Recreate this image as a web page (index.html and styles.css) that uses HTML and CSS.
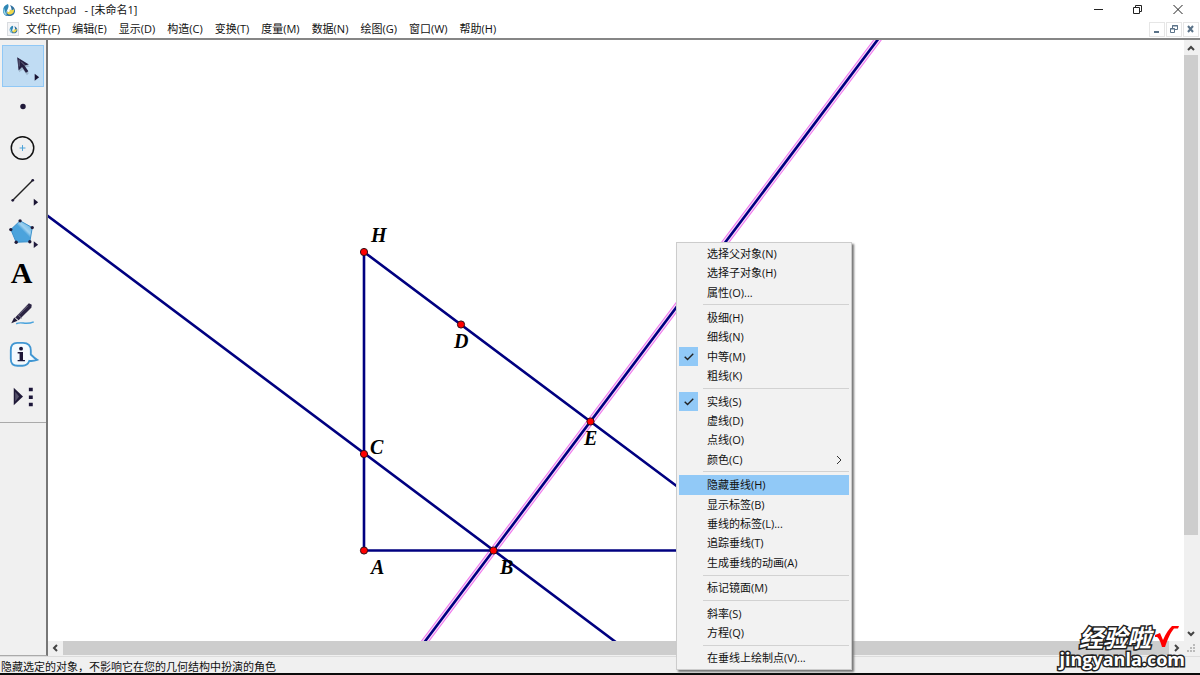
FILE: index.html
```html
<!DOCTYPE html>
<html lang="zh-CN">
<head>
<meta charset="utf-8">
<title>Sketchpad - [未命名1]</title>
<link rel="stylesheet" href="styles.css">
</head>
<body>
<svg class="defs" aria-hidden="true">
  <defs>
    <linearGradient id="penta" x1="1" y1="0" x2="0" y2="1"><stop offset="0.1" stop-color="#5fb0e0"/><stop offset="0.35" stop-color="#a0d2f1"/><stop offset="0.45" stop-color="#4ba3dc"/><stop offset="1" stop-color="#4ba3dc"/></linearGradient>
    <symbol id="logo" viewBox="0 0 14 14">
      <path d="M6 1C3 2 1 4 1 7.500s2 5.500 5 5.500c-2-2-2-4-.500-6.500C6.500 4.500 7 3 6 1z" fill="#2f86b4"/>
      <path d="M2 5c1 3 1 5 3.500 7.500L3 11.500C1.500 10 1 7 2 5z" fill="#9fdcf0"/>
      <path d="M8 2c3 1 5 3 5 6s-2.500 5-5.500 5S4 11 5 8c1 2 2 2.500 3.500 2S10 5 8 2z" fill="#2d6f9f"/>
      <path d="M7.500 6c2 2 3 1.500 4.500 0 .500 3-1 5-3.500 5.500S5 10.500 5 8.500c1.500 1.500 3.500 0 2.500-2.500z" fill="#f0d84a"/>
    </symbol>
  </defs>
</svg>
<div class="window">
  <header class="titlebar">
    <svg class="app-icon"><use href="#logo"/></svg>
    <h1 class="title"><span>Sketchpad</span><span>- [未命名1]</span></h1>
    <div class="window-controls">
      <button aria-label="最小化"><svg width="12" height="12" viewBox="0 0 12 12"><path d="M2 5.500h9"/></svg></button>
      <button aria-label="还原"><svg width="12" height="12" viewBox="0 0 12 12"><path d="M1.500 3.500h6v6h-6zM3.500 3.500v-2h6v6h-2"/></svg></button>
      <button aria-label="关闭"><svg width="12" height="12" viewBox="0 0 12 12"><path d="M1.500 1l9 9M10.500 1l-9 9"/></svg></button>
    </div>
  </header>
  <nav class="menubar">
    <span class="doc-icon"><svg><use href="#logo"/></svg></span>
    <div class="menus">
      <button>文件(F)</button><button>编辑(E)</button><button>显示(D)</button><button>构造(C)</button><button>变换(T)</button><button>度量(M)</button><button>数据(N)</button><button>绘图(G)</button><button>窗口(W)</button><button>帮助(H)</button>
    </div>
    <div class="doc-controls">
      <button aria-label="最小化文档"><svg width="10" height="10" viewBox="0 0 10 10"><path d="M2 8h5"/></svg></button>
      <button aria-label="还原文档"><svg width="10" height="10" viewBox="0 0 10 10"><path class="thin" d="M1.500 4.500h4v4h-4zM1 5h5M3.500 4V1.500h5v4H6M3 2h6"/></svg></button>
      <button aria-label="关闭文档"><svg width="10" height="10" viewBox="0 0 10 10"><path d="M2 2l5 6M7 2L2 8"/></svg></button>
    </div>
  </nav>
  <main class="workspace">
    <aside class="toolbox">
      <div class="tools">
        <button class="tool selected" aria-label="移动箭头工具"><svg viewBox="0 0 42 42"><path d="M16 14l12 8-5 1 4 6-2 2-4-6-4 3z" fill="#8296a9" opacity=".5"/><path d="M15 12.500l12 7.500-4.500 1 4 6-2.500 1.500-4-6-3.500 3.500z" fill="#251f40"/><path d="M17 15v7M19 17l4 4" stroke="#70708a"/><path d="M33 29.500v7l4.500-3.500z" fill="#1a1433"/></svg></button>
        <button class="tool" aria-label="点工具"><svg viewBox="0 0 42 42"><circle cx="21" cy="20" r="2.800" fill="#201a3a"/></svg></button>
        <button class="tool" aria-label="圆工具"><svg viewBox="0 0 42 42"><circle cx="20.500" cy="20.500" r="11.500" fill="none" stroke="#111" stroke-width="1.500"/><path d="M17.500 20.500h6M20.500 17.500v6" stroke="#4aa1d8"/></svg></button>
        <button class="tool" aria-label="线段工具"><svg viewBox="0 0 42 42"><path d="M10.500 31L31 10.500" stroke="#222" stroke-width="1.400"/><circle cx="10.500" cy="31" r="1.400"/><circle cx="31" cy="10.500" r="1.400"/><path d="M32 29.500v7l4.500-3.500z" fill="#1a1433"/></svg></button>
        <button class="tool" aria-label="多边形工具"><svg viewBox="0 0 42 42"><path d="M18 9l12.500 7L28 30.500 14 31 8.500 18z" fill="url(#penta)" stroke="#3990cc"/><g fill="#211b3d"><circle cx="18" cy="9" r="1.700"/><circle cx="30.500" cy="16" r="1.700"/><circle cx="28" cy="30.500" r="1.700"/><circle cx="14" cy="31" r="1.700"/><circle cx="8.500" cy="18" r="1.700"/><path d="M32 30v7l4.500-3.500z"/></g></svg></button>
        <button class="tool" aria-label="文本工具"><span class="letter">A</span></button>
        <button class="tool" aria-label="标记工具"><svg viewBox="0 0 42 42"><path d="M14 30.500c6-3 9 2 18-2" fill="none" stroke="#49a2dc" stroke-width="1.500"/><path d="M9 30l3-6 3.500 3.500z" fill="#201a38"/><path d="M13 24L27 9.500l3 1.500-.500 3-13 13z" fill="#2a2342"/><path d="M16 21.500l4 3.500M17 21l9-9" stroke="#77738a"/></svg></button>
        <button class="tool" aria-label="信息工具"><svg viewBox="0 0 42 42"><path d="M15 8h6q8 0 8 8v4q4 4 6.500 5.500-4 1.500-8 1-2 5-7 5h-5q-7 0-7-7v-9q0-7.500 6.500-7.500z" fill="#f4fafe" stroke="#4096d2" stroke-width="1.900"/><circle cx="19" cy="14" r="2" fill="#1c1639"/><path d="M15.500 17.500H21V25.500h2V27h-7.500V25.500h2v-6.500h-2z" fill="#1c1639"/></svg></button>
        <button class="tool" aria-label="自定义工具"><svg viewBox="0 0 42 42"><path d="M11.500 11v18l9.500-9z" fill="#201a38"/><path d="M13 15v10l4-5z" fill="#55516a"/><path d="M27 11h4v3.500h-4zM27 19h4v3.500h-4zM27 26.500h4V30h-4z" fill="#1c1639"/></svg></button>
      </div>
    </aside>
    <section class="document">
      <svg class="canvas" role="img" aria-label="几何图形">
        <g transform="translate(-48 -40)">
          <path class="halo" d="M417 652L885 30"/>
          <path class="halo-fill" d="M417 652L885 30"/>
          <g class="lines"><path d="M40 210L629 652M364 550.500V252L700 503.500M364 550.500H740M417 652L885 30"/></g>
          <g class="points"><circle cx="364" cy="252" r="3.600"/><circle cx="461" cy="324.500" r="3.600"/><circle cx="590.500" cy="421.500" r="3.600"/><circle cx="364" cy="454" r="3.600"/><circle cx="364" cy="550.500" r="3.600"/><circle cx="493.500" cy="550.500" r="3.600"/></g>
          <g class="labels"><text x="371" y="242">H</text><text x="454" y="348">D</text><text x="584" y="445">E</text><text x="370" y="454">C</text><text x="371" y="574">A</text><text x="500" y="574">B</text></g>
        </g>
      </svg>
      <div class="scroll vertical">
        <button aria-label="向上滚动"><svg width="10" height="10" viewBox="0 0 10 10"><path d="M2 7l3-3 3 3"/></svg></button>
        <div class="track"><div class="thumb"></div></div>
        <button aria-label="向下滚动"><svg width="10" height="10" viewBox="0 0 10 10"><path d="M2 3l3 3 3-3"/></svg></button>
      </div>
      <div class="scroll horizontal">
        <button aria-label="向左滚动"><svg width="10" height="10" viewBox="0 0 10 10"><path d="M6 2L3 5l3 3"/></svg></button>
        <div class="track"><div class="thumb"></div></div>
        <button aria-label="向右滚动"><svg width="10" height="10" viewBox="0 0 10 10"><path d="M3 2l3 3-3 3"/></svg></button>
      </div>
      <svg class="grip" viewBox="0 0 14 14"><path d="M9 3h2v2H9zM6 6h2v2H6zM9 6h2v2H9zM3 9h2v2H3zM6 9h2v2H6zM9 9h2v2H9z"/></svg>
    </section>
  </main>
  <footer class="status">隐藏选定的对象，不影响它在您的几何结构中扮演的角色</footer>
</div>

<div class="context-menu" role="menu">
  <button role="menuitem">选择父对象(N)</button>
  <button role="menuitem">选择子对象(H)</button>
  <button role="menuitem">属性(O)...</button>
  <hr>
  <button role="menuitem">极细(H)</button>
  <button role="menuitem">细线(N)</button>
  <button role="menuitemradio" aria-checked="true"><svg class="check" viewBox="0 0 20 20"><path d="M6 10l3 3 6-6"/></svg>中等(M)</button>
  <button role="menuitem">粗线(K)</button>
  <hr>
  <button role="menuitemradio" aria-checked="true"><svg class="check" viewBox="0 0 20 20"><path d="M6 10l3 3 6-6"/></svg>实线(S)</button>
  <button role="menuitem">虚线(D)</button>
  <button role="menuitem">点线(O)</button>
  <button role="menuitem">颜色(C)<svg class="more" viewBox="0 0 8 10"><path d="M2 1l4 4-4 4"/></svg></button>
  <hr>
  <button class="active" role="menuitem">隐藏垂线(H)</button>
  <button role="menuitem">显示标签(B)</button>
  <button role="menuitem">垂线的标签(L)...</button>
  <button role="menuitem">追踪垂线(T)</button>
  <button role="menuitem">生成垂线的动画(A)</button>
  <hr>
  <button role="menuitem">标记镜面(M)</button>
  <hr>
  <button role="menuitem">斜率(S)</button>
  <button role="menuitem">方程(Q)</button>
  <hr>
  <button role="menuitem">在垂线上绘制点(V)...</button>
</div>

<div class="watermark">
  <div class="brand"><span>经验啦</span><svg viewBox="0 0 24 24"><path d="M0 10l5-2 3 7C11 8 14 4 17 1h7l-1 2.500h-4c-4 5-6 10-9 18.500H7C6 18 4 13 2 12H0z" fill="#f00"/></svg></div>
  <div class="site">jingyanla.com</div>
</div>
</body>
</html>
```
FILE: styles.css
```css
* { box-sizing: border-box; }
body {
  margin: 0;
  font: 11px/16px "Open Sans", "Noto Sans CJK SC", sans-serif;
  color: #111;
  overflow: hidden;
}
button {
  margin: 0;
  padding: 0;
  border: 0;
  background: none;
  color: inherit;
  font: inherit;
}
svg { display: block; }
.defs { position: absolute; width: 0; height: 0; }
.window {
  display: flex;
  flex-direction: column;
  height: 100vh;
  background: #fff;
  border-bottom: 2px solid #0b0b0b;
}

.titlebar {
  display: flex;
  align-items: center;
  height: 20px;
  padding-left: 2px;
}
.app-icon { width: 14px; height: 14px; }
.title {
  display: flex;
  gap: 8px;
  margin: 0 auto 0 7px;
  font-size: 11px;
  font-weight: 400;
}
.window-controls { display: flex; padding-right: 2px; }
.window-controls button {
  display: grid;
  place-items: center;
  width: 40px;
  height: 18px;
}
.window-controls svg { fill: none; stroke: #222; stroke-width: 1; }

.menubar {
  display: flex;
  align-items: center;
  height: 20px;
  padding: 0 1px 0 7px;
  border-bottom: 2px solid #868686;
}
.doc-icon {
  display: grid;
  place-items: center;
  width: 12px;
  height: 14px;
  background: #f4f5f7;
  border: 1px solid #d9dce0;
}
.doc-icon svg { width: 9px; height: 9px; }
.menus { display: flex; gap: 12px; margin: 0 auto 0 7px; }
.doc-controls { display: flex; gap: 1px; }
.doc-controls button {
  display: grid;
  place-items: center;
  width: 16px;
  height: 15px;
  border: 1px solid #e6e6e6;
}
.doc-controls svg { fill: none; stroke: #5b7389; stroke-width: 2; }
.doc-controls .thin { stroke-width: 1; }

.workspace { display: flex; flex: 1; min-height: 0; }
.toolbox {
  flex: 0 0 48px;
  background: #f0f0f0;
  border-right: 2px solid #777;
  border-bottom: 1px solid #aaa;
}
.tools {
  display: flex;
  flex-direction: column;
  align-items: center;
  min-height: 383px;
  padding: 5px 0 4px;
  border-bottom: 1px solid #aaa;
}
.tool {
  display: grid;
  place-items: center;
  flex: 1;
  width: 42px;
}
.tool svg { width: 42px; height: 41px; fill: none; }
.tool.selected { background: #c0dcf3; box-shadow: inset 0 0 0 1px #90c8f6; }
.tool circle:not([fill]) { fill: #201a38; }
.letter {
  padding-right: 3px;
  font: bold 30px/40px "Liberation Serif", serif;
  color: #000;
}

.document {
  display: grid;
  grid-template-columns: 1fr 14px;
  grid-template-rows: 1fr 14px;
  flex: 1;
  min-width: 0;
  padding: 0 2px 1px 0;
  background: #f0f0f0;
}
.canvas { width: 100%; height: 100%; background: #fff; overflow: hidden; }
.halo { stroke: #ef75ec; stroke-width: 7; }
.halo-fill { stroke: #fad8fa; stroke-width: 5; }
.lines { fill: none; stroke: #000080; stroke-width: 2.6; }
.points { fill: #f00; stroke: #301018; stroke-width: 1; }
.labels { font: italic bold 20px "Liberation Serif", serif; fill: #000; }

.scroll { display: flex; background: #f0f0f0; }
.scroll button { display: grid; place-items: center; flex: 0 0 15px; }
.scroll svg { fill: none; stroke: #444; stroke-width: 2; }
.scroll .track { display: flex; flex: 1; }
.scroll .thumb { background: #cdcdcd; }
.vertical { flex-direction: column; }
.vertical .track { flex-direction: column; }
.vertical .thumb { height: 84%; }
.horizontal { grid-row: 2; }
.horizontal .thumb { width: 100%; }
.grip { width: 14px; height: 14px; fill: #bbb; }

.status {
  height: 17px;
  padding: 2px 1px 0;
  border-top: 1px solid #dcdcdc;
  background: #f0f0f0;
  line-height: 15px;
  white-space: nowrap;
}

.context-menu {
  position: absolute;
  left: 676px;
  top: 242px;
  display: flex;
  flex-direction: column;
  width: 176px;
  min-height: 428px;
  padding: 1px 2px;
  background: #f2f2f2;
  border: 1px solid #ccc;
  box-shadow: 2px 2px 2px #777;
}
.context-menu button {
  display: flex;
  align-items: center;
  flex: 1;
  padding-left: 28px;
  position: relative;
  white-space: nowrap;
}
.context-menu .active { background: #91c9f7; }
.context-menu hr {
  width: 146px;
  height: 1px;
  margin: 2px 0 3px auto;
  border: 0;
  background: #d2d2d2;
}
.check {
  position: absolute;
  left: 0;
  top: 0;
  width: 19px;
  height: 100%;
  background: #91c9f7;
  fill: none;
  stroke: #222;
  stroke-width: 1.5;
}
.more {
  width: 8px;
  height: 10px;
  margin: 0 6px 0 auto;
  fill: none;
  stroke: #333;
}

.watermark {
  position: absolute;
  right: 15px;
  bottom: 7px;
  color: #fff;
  -webkit-text-stroke: 3px #222;
  paint-order: stroke fill;
}
.brand { display: flex; align-items: center; justify-content: flex-end; gap: 4px; padding-right: 6px; }
.brand span { font: italic bold 24px/26px "Noto Sans CJK SC", sans-serif; }
.brand svg { width: 24px; height: 24px; }
.site { font: bold 18px/18px "Open Sans", sans-serif; }
```
